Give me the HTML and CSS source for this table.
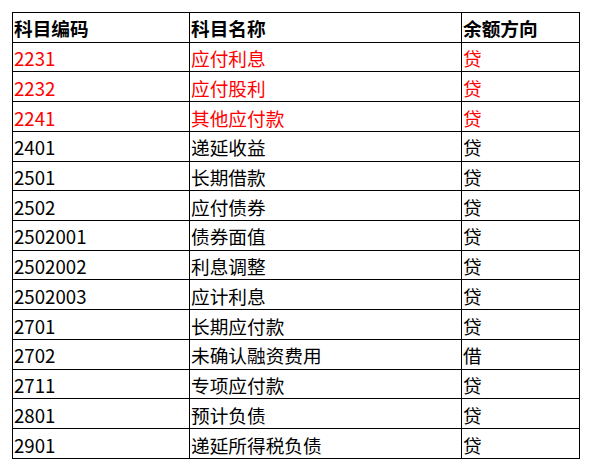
FILE: index.html
```html
<!DOCTYPE html>
<html lang="zh">
<head>
<meta charset="utf-8">
<link rel="stylesheet" href="styles.css">
</head>
<body>
<table class="sheet">
  <colgroup>
    <col class="c1"><col class="c2"><col class="c3">
  </colgroup>
  <tr class="head"><td>科目编码</td><td>科目名称</td><td>余额方向</td></tr>
  <tr class="red"><td>2231</td><td>应付利息</td><td>贷</td></tr>
  <tr class="red"><td>2232</td><td>应付股利</td><td>贷</td></tr>
  <tr class="red"><td>2241</td><td>其他应付款</td><td>贷</td></tr>
  <tr><td>2401</td><td>递延收益</td><td>贷</td></tr>
  <tr><td>2501</td><td>长期借款</td><td>贷</td></tr>
  <tr><td>2502</td><td>应付债券</td><td>贷</td></tr>
  <tr><td>2502001</td><td>债券面值</td><td>贷</td></tr>
  <tr><td>2502002</td><td>利息调整</td><td>贷</td></tr>
  <tr><td>2502003</td><td>应计利息</td><td>贷</td></tr>
  <tr><td>2701</td><td>长期应付款</td><td>贷</td></tr>
  <tr><td>2702</td><td>未确认融资费用</td><td>借</td></tr>
  <tr><td>2711</td><td>专项应付款</td><td>贷</td></tr>
  <tr><td>2801</td><td>预计负债</td><td>贷</td></tr>
  <tr><td>2901</td><td>递延所得税负债</td><td>贷</td></tr>
</table>
</body>
</html>
```

FILE: styles.css
```css
html, body {
  margin: 0;
  padding: 0;
  background: #ffffff;
}
body {
  padding: 12px 0 0 12px;
  font-family: "Noto Sans CJK SC", "Noto Sans", sans-serif;
  font-size: 18.67px;
  color: #000;
}
.sheet {
  border-collapse: collapse;
  table-layout: fixed;
  width: 567px;
  height: 447px;
}
.c1 { width: 177px; }
.c2 { width: 272px; }
.c3 { width: 118px; }
.sheet td {
  border: 1px solid #000;
  padding: 2px 0 0 1px;
  line-height: 24px;
  vertical-align: middle;
  white-space: nowrap;
  overflow: hidden;
}
.head td {
  font-weight: bold;
}
.red td {
  color: #ff0000;
}
```
